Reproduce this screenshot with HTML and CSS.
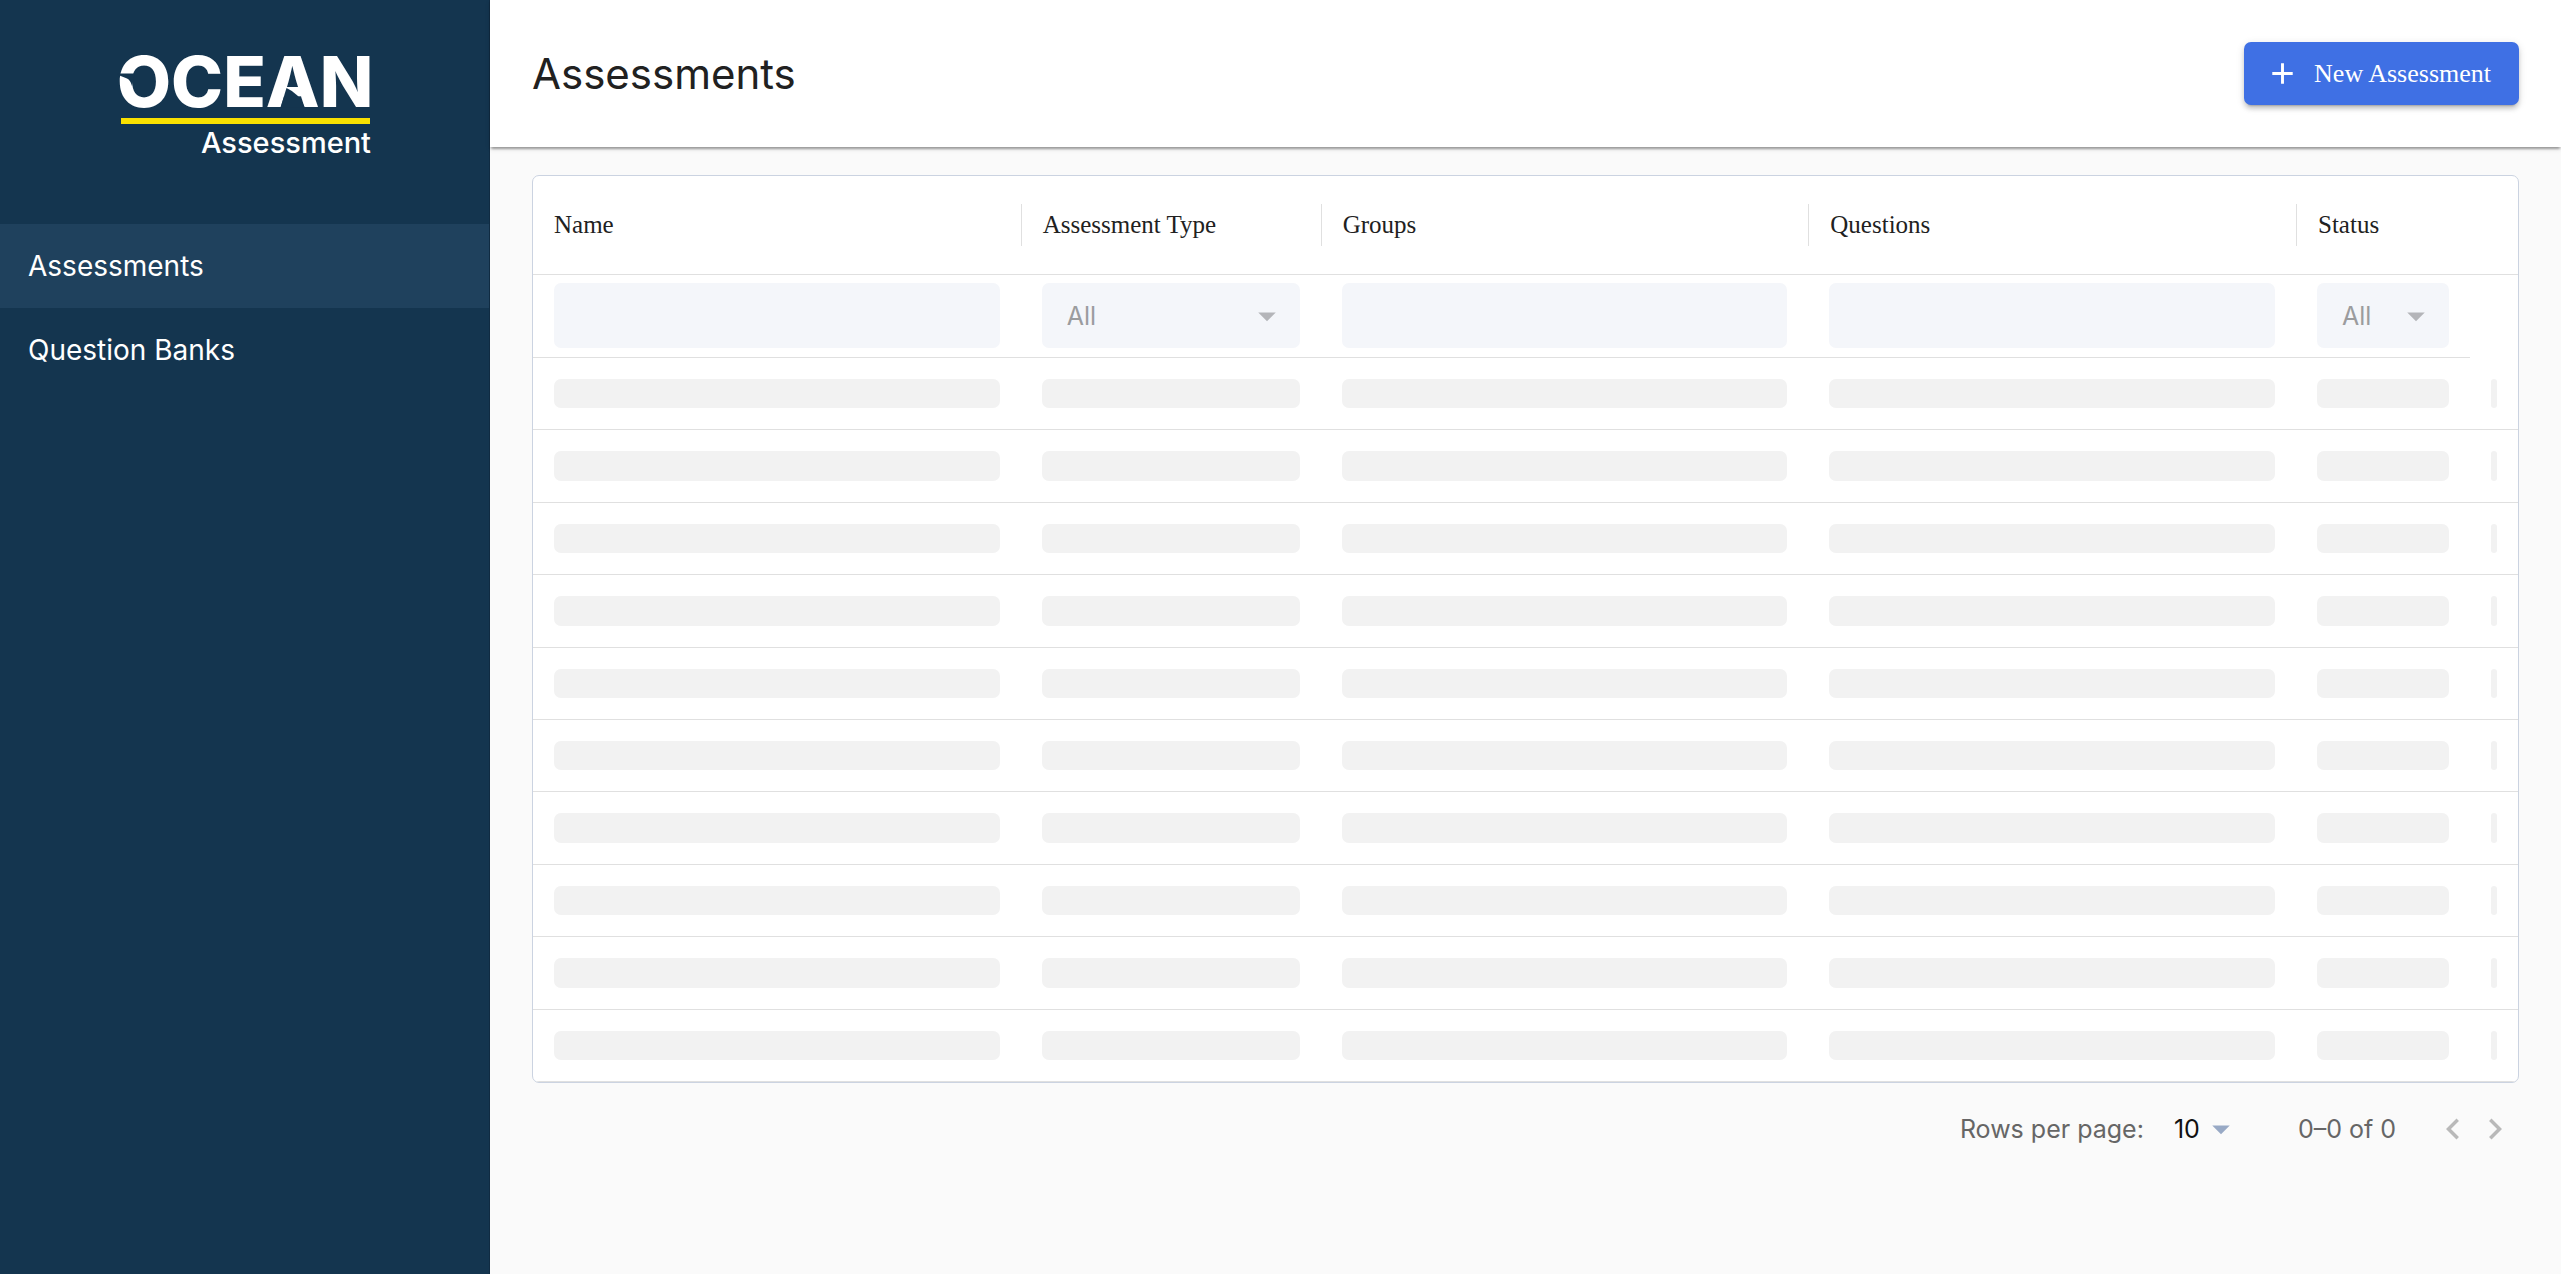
FILE: index.html
```html
<!DOCTYPE html>
<html lang="en">
<head>
<meta charset="utf-8">
<meta name="viewport" content="width=device-width, initial-scale=1">
<title>Assessments</title>
<link rel="stylesheet" href="styles.css">
</head>
<body>
<div class="app">
  <aside class="sidebar">
    <div class="brand">
      <svg class="logo" viewBox="0 0 256 104" role="img" aria-label="Ocean Assessment">
        <text class="logo-name" x="0" y="54">OCEAN</text>
        <path class="logo-cut" d="M0 20.500H18L15 33Q13.500 27 10 25.500L0 21.500Z"/>
        <path class="logo-cut" d="M169.500 35Q183 41 187.700 54.500H163.500Z"/>
        <rect class="logo-line" x="4" y="65" width="249" height="6"/>
        <text class="logo-sub" x="254" y="100" text-anchor="end">Assessment</text>
      </svg>
    </div>
    <nav class="nav">
      <a class="nav-link nav-link-active" href="#assessments" aria-current="page">Assessments</a>
      <a class="nav-link" href="#question-banks">Question Banks</a>
    </nav>
  </aside>
  <main class="main">
    <header class="header">
      <h1 class="title">Assessments</h1>
      <button class="new-button" type="button">
        <svg class="icon-add" viewBox="0 0 24 24" aria-hidden="true"><path d="M19 13h-6v6h-2v-6H5v-2h6V5h2v6h6z"/></svg>
        New Assessment
      </button>
    </header>
    <section class="content">
      <div class="card">
        <table class="table">
          <colgroup>
            <col><col class="col-type"><col><col><col class="col-status"><col class="col-actions">
          </colgroup>
          <thead>
            <tr class="head-row">
              <th scope="col"><div class="head-cell">Name</div></th>
              <th scope="col"><div class="head-cell">Assessment Type</div></th>
              <th scope="col"><div class="head-cell">Groups</div></th>
              <th scope="col"><div class="head-cell">Questions</div></th>
              <th scope="col"><div class="head-cell">Status</div></th>
              <td></td>
            </tr>
            <tr class="filter-row">
              <td><input class="field" type="text" aria-label="Filter by name" disabled></td>
              <td><div class="select-wrap"><select class="field" aria-label="Filter by assessment type" disabled><option>All</option></select><svg class="caret" viewBox="0 0 24 24" aria-hidden="true"><path d="M7 10l5 5 5-5z"/></svg></div></td>
              <td><input class="field" type="text" aria-label="Filter by groups" disabled></td>
              <td><input class="field" type="text" aria-label="Filter by questions" disabled></td>
              <td><div class="select-wrap"><select class="field" aria-label="Filter by status" disabled><option>All</option></select><svg class="caret" viewBox="0 0 24 24" aria-hidden="true"><path d="M7 10l5 5 5-5z"/></svg></div></td>
              <td></td>
            </tr>
          </thead>
          <tbody class="loading" aria-busy="true">
            <tr><td><div class="bone"></div></td><td><div class="bone"></div></td><td><div class="bone"></div></td><td><div class="bone"></div></td><td><div class="bone"></div></td><td><div class="bone"></div></td></tr>
            <tr><td><div class="bone"></div></td><td><div class="bone"></div></td><td><div class="bone"></div></td><td><div class="bone"></div></td><td><div class="bone"></div></td><td><div class="bone"></div></td></tr>
            <tr><td><div class="bone"></div></td><td><div class="bone"></div></td><td><div class="bone"></div></td><td><div class="bone"></div></td><td><div class="bone"></div></td><td><div class="bone"></div></td></tr>
            <tr><td><div class="bone"></div></td><td><div class="bone"></div></td><td><div class="bone"></div></td><td><div class="bone"></div></td><td><div class="bone"></div></td><td><div class="bone"></div></td></tr>
            <tr><td><div class="bone"></div></td><td><div class="bone"></div></td><td><div class="bone"></div></td><td><div class="bone"></div></td><td><div class="bone"></div></td><td><div class="bone"></div></td></tr>
            <tr><td><div class="bone"></div></td><td><div class="bone"></div></td><td><div class="bone"></div></td><td><div class="bone"></div></td><td><div class="bone"></div></td><td><div class="bone"></div></td></tr>
            <tr><td><div class="bone"></div></td><td><div class="bone"></div></td><td><div class="bone"></div></td><td><div class="bone"></div></td><td><div class="bone"></div></td><td><div class="bone"></div></td></tr>
            <tr><td><div class="bone"></div></td><td><div class="bone"></div></td><td><div class="bone"></div></td><td><div class="bone"></div></td><td><div class="bone"></div></td><td><div class="bone"></div></td></tr>
            <tr><td><div class="bone"></div></td><td><div class="bone"></div></td><td><div class="bone"></div></td><td><div class="bone"></div></td><td><div class="bone"></div></td><td><div class="bone"></div></td></tr>
            <tr><td><div class="bone"></div></td><td><div class="bone"></div></td><td><div class="bone"></div></td><td><div class="bone"></div></td><td><div class="bone"></div></td><td><div class="bone"></div></td></tr>
          </tbody>
        </table>
      </div>
      <div class="pagination">
        <label for="page-size">Rows per page:</label>
        <div class="page-size-wrap">
          <select class="page-size" id="page-size"><option>10</option></select>
          <svg class="caret caret-blue" viewBox="0 0 24 24" aria-hidden="true"><path d="M7 10l5 5 5-5z"/></svg>
        </div>
        <span class="range">0–0 of 0</span>
        <div class="pager">
          <button class="page-button" type="button" aria-label="Previous page" disabled><svg viewBox="0 0 24 24" aria-hidden="true"><path d="M15.410 7.410L14 6l-6 6 6 6 1.410-1.410L10.830 12z"/></svg></button>
          <button class="page-button" type="button" aria-label="Next page" disabled><svg viewBox="0 0 24 24" aria-hidden="true"><path d="M10 6L8.590 7.410 13.170 12l-4.580 4.590L10 18l6-6z"/></svg></button>
        </div>
      </div>
    </section>
  </main>
</div>
</body>
</html>
```
FILE: styles.css
```css
* {
  box-sizing: border-box;
}

body {
  margin: 0;
  background: #fafafa;
  color: #212121;
  font-family: Inter, "Liberation Sans", sans-serif;
  font-size: 25px;
}

.app {
  display: flex;
  min-height: 100vh;
}

/* Sidebar */
.sidebar {
  flex: 0 0 490px;
  background: #14354f;
  border-right: 1px solid #102b42;
}

.brand {
  display: flex;
  justify-content: center;
  padding: 53px 0 67px;
}

.logo {
  width: 256px;
  height: 104px;
  overflow: visible;
}

.logo-name {
  fill: #fff;
  font-size: 70px;
  font-weight: 800;
}

.logo-sub {
  fill: #fff;
  font-size: 29px;
  font-weight: 500;
}

.logo-cut {
  fill: #14354f;
}

.logo-line {
  fill: #fae100;
}

.nav {
  display: flex;
  flex-direction: column;
}

.nav-link {
  padding: 21px 28px;
  color: #fff;
  font-size: 28px;
  line-height: 42px;
  text-decoration: none;
}

.nav-link-active {
  background: #1f415d;
}

/* Header */
.main {
  flex: 1;
  min-width: 0;
}

.header {
  display: flex;
  align-items: center;
  justify-content: space-between;
  padding: 42px;
  background: #fff;
  box-shadow: 0 4px 2px -2px rgba(0, 0, 0, .2), 0 2px 2px rgba(0, 0, 0, .14), 0 2px 5px rgba(0, 0, 0, .12);
}

.title {
  margin: 0;
  font-size: 42px;
  font-weight: 400;
  line-height: 56px;
}

.new-button {
  display: flex;
  align-items: center;
  gap: 14px;
  height: 63px;
  padding: 0 28px 0 21px;
  border: 0;
  border-radius: 7px;
  background: #3f70e4;
  box-shadow: 0 5px 2px -4px rgba(0, 0, 0, .2), 0 4px 4px rgba(0, 0, 0, .14), 0 2px 9px rgba(0, 0, 0, .12);
  color: #fff;
  font-family: "Liberation Serif", serif;
  font-size: 26px;
}

.icon-add {
  width: 35px;
  height: 35px;
  fill: currentColor;
}

/* Table */
.content {
  padding: 28px 42px;
}

.card {
  border: 1px solid #cbd3e1;
  border-radius: 7px;
  background: #fff;
  overflow: hidden;
}

.table {
  width: 100%;
  table-layout: fixed;
  border-collapse: separate;
  border-spacing: 0;
}

.col-type {
  width: 300px;
}

.col-status {
  width: 174px;
}

.col-actions {
  width: 48px;
}

.table th,
.table td {
  border-bottom: 1px solid #e0e0e0;
}

.head-row th {
  padding: 28px 0;
  font-family: "Liberation Serif", serif;
  font-size: 25px;
  font-weight: 400;
  text-align: left;
}

.head-cell {
  padding-left: 21px;
  line-height: 42px;
}

.head-row th + th .head-cell {
  border-left: 1px solid #e0e0e0;
}

.filter-row td {
  padding: 8px 21px 9px;
}

.filter-row td:last-child {
  border-bottom: 0;
}

.field {
  display: block;
  width: 100%;
  height: 65px;
  padding: 0 25px;
  border: 0;
  border-radius: 7px;
  background: #f4f6fa;
  color: #9b9c9e;
  font: inherit;
  opacity: 1;
  appearance: none;
}

.select-wrap,
.page-size-wrap {
  display: grid;
  align-items: center;
}

.select-wrap > *,
.page-size-wrap > * {
  grid-area: 1 / 1;
}

.caret {
  width: 42px;
  height: 42px;
  margin-right: 12px;
  justify-self: end;
  fill: #b4b5b9;
  pointer-events: none;
}

.loading td {
  padding: 21px;
}

.bone {
  height: 29px;
  border-radius: 7px;
  background: #f2f2f2;
}

.loading tr:nth-child(5n + 2) .bone,
.loading tr:nth-child(5n + 4) .bone {
  height: 30px;
}

/* Pagination */
.pagination {
  display: flex;
  align-items: center;
  justify-content: flex-end;
  height: 91px;
  padding-right: 3px;
  color: #666;
}

.page-size-wrap {
  margin: 0 56px 0 16px;
}

.page-size {
  width: 82px;
  padding: 0 14px;
  border: 0;
  background: none;
  color: #111;
  font: inherit;
  line-height: 42px;
  appearance: none;
}

.caret-blue {
  margin-right: 0;
  fill: #98a9c5;
}

.pager {
  display: flex;
  margin-left: 36px;
}

.page-button {
  display: flex;
  padding: 0;
  border: 0;
  background: none;
}

.page-button svg {
  width: 42px;
  height: 42px;
  fill: #b9b9b9;
}
```
